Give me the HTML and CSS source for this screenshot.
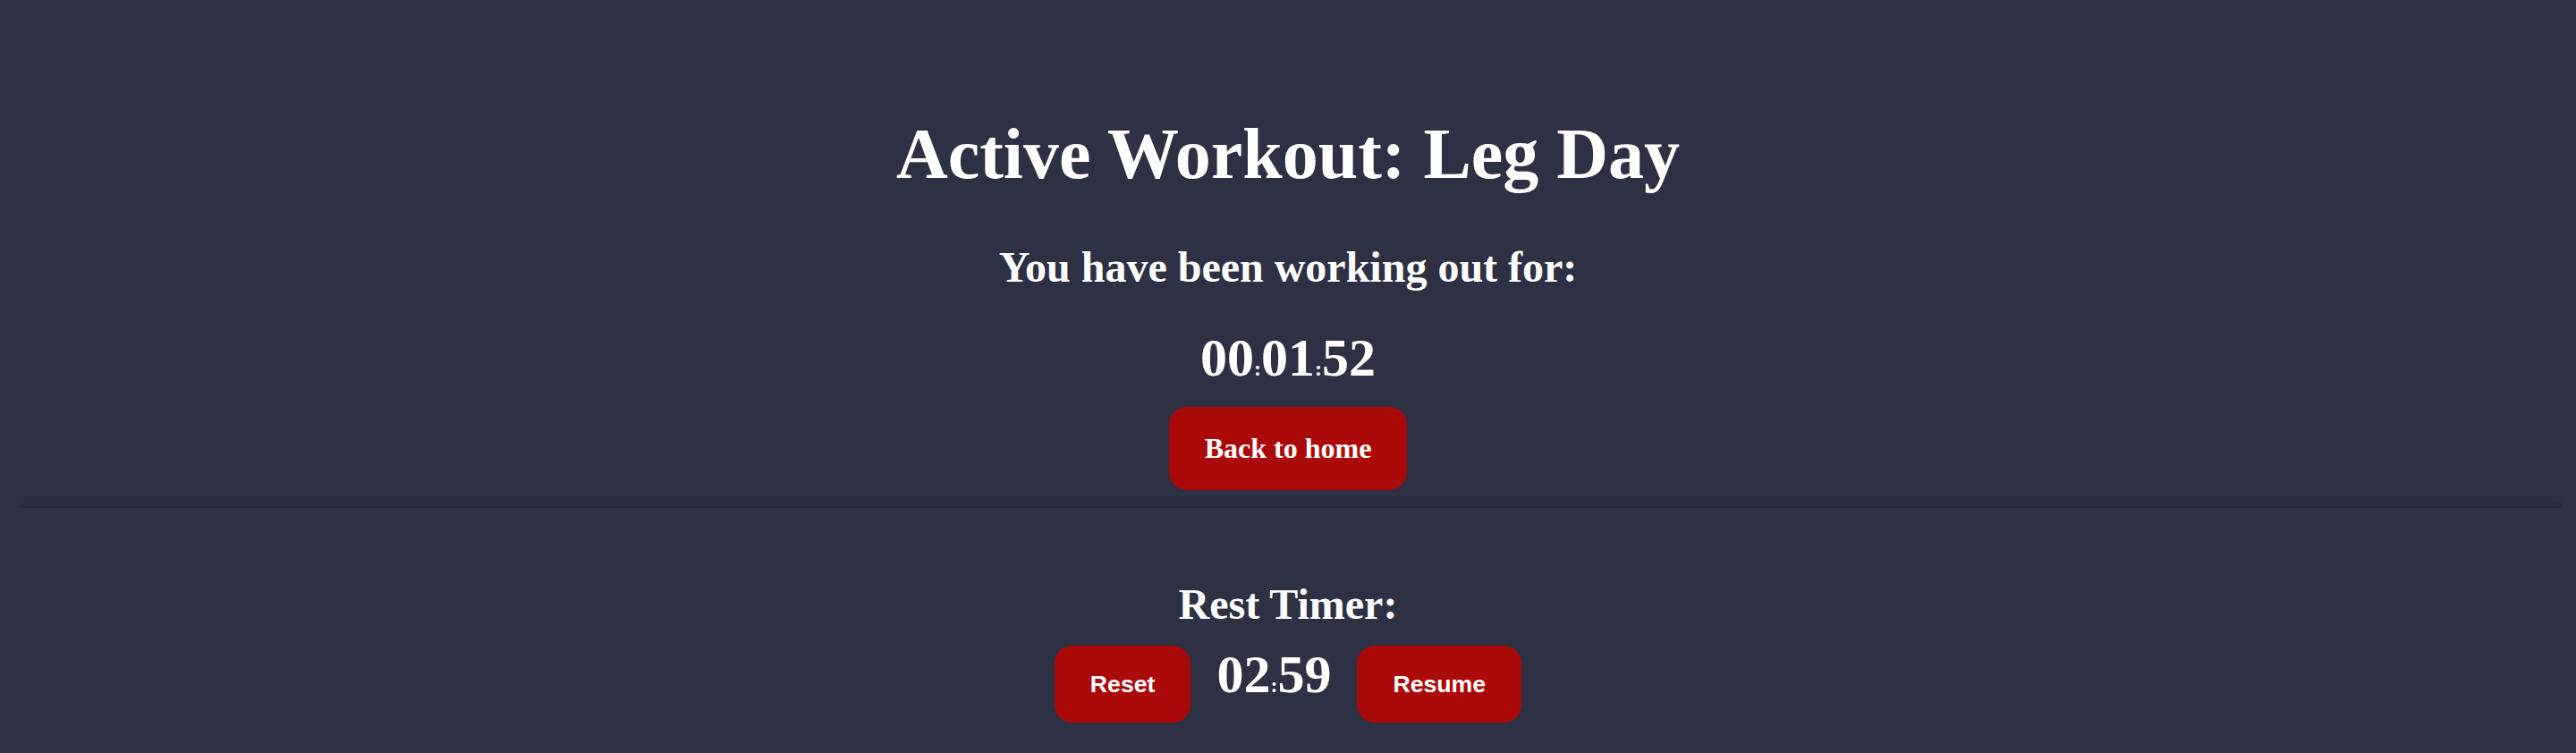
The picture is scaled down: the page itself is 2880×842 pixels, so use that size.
FILE: index.html
```html
<!DOCTYPE html>
<html lang="en">
<head>
<meta charset="utf-8">
<title>Active Workout</title>
<link rel="stylesheet" href="styles.css">
</head>
<body>
<main class="page">
  <section class="summary">
    <h1 class="title">Active Workout: Leg Day</h1>
    <h2 class="subtitle subtitle-top">You have been working out for:</h2>
    <div class="clock"><span class="digits">00</span><span class="sep">:</span><span class="digits">01</span><span class="sep">:</span><span class="digits">52</span></div>
    <button class="btn btn-serif" type="button">Back to home</button>
  </section>
  <section class="rest">
    <h2 class="subtitle subtitle-rest">Rest Timer:</h2>
    <div class="rest-row">
      <button class="btn btn-sans" type="button">Reset</button>
      <div class="clock"><span class="digits">02</span><span class="sep">:</span><span class="digits">59</span></div>
      <button class="btn btn-sans" type="button">Resume</button>
    </div>
  </section>
</main>
</body>
</html>
```

FILE: styles.css
```css
html, body {
  background: #2e3044;
}
body {
  margin: 16px;
  color: #ffffff;
  font-family: "Liberation Serif", "Times New Roman", serif;
}
.page {
  display: flex;
  flex-direction: column;
}
.summary {
  display: flex;
  flex-direction: column;
  align-items: center;
  padding-top: 56px;
}
.title {
  margin: 54px 0 53px;
  font-size: 80px;
  line-height: 92px;
  font-weight: bold;
}
.subtitle {
  font-size: 48px;
  line-height: 55px;
  font-weight: bold;
  text-align: center;
}
.subtitle-top {
  margin: 0 0 40px;
}
.clock {
  font-size: 60px;
  line-height: 69px;
  font-weight: bold;
  white-space: nowrap;
}
.sep {
  font-size: 24px;
  line-height: 1;
}
.btn {
  border: none;
  border-radius: 20px;
  background: #ab0a0b;
  color: #ffffff;
  font-weight: bold;
  padding: 28px 40px;
  cursor: pointer;
}
.btn-serif {
  margin: 20px 0;
  font-family: "Liberation Serif", "Times New Roman", serif;
  font-size: 32px;
  line-height: 37px;
}
.btn-sans {
  font-family: "Liberation Sans", Arial, sans-serif;
  font-size: 26.67px;
  line-height: 30px;
}
.rest {
  display: flex;
  flex-direction: column;
  align-items: center;
  padding: 40px 0;
  background: #2e3044;
  box-shadow: 4px -2px 10px rgba(0, 0, 0, 0.22);
}
.subtitle-rest {
  margin: 40px 0 17px;
}
.rest-row {
  display: flex;
  align-items: baseline;
  justify-content: center;
  gap: 29px;
}
```
